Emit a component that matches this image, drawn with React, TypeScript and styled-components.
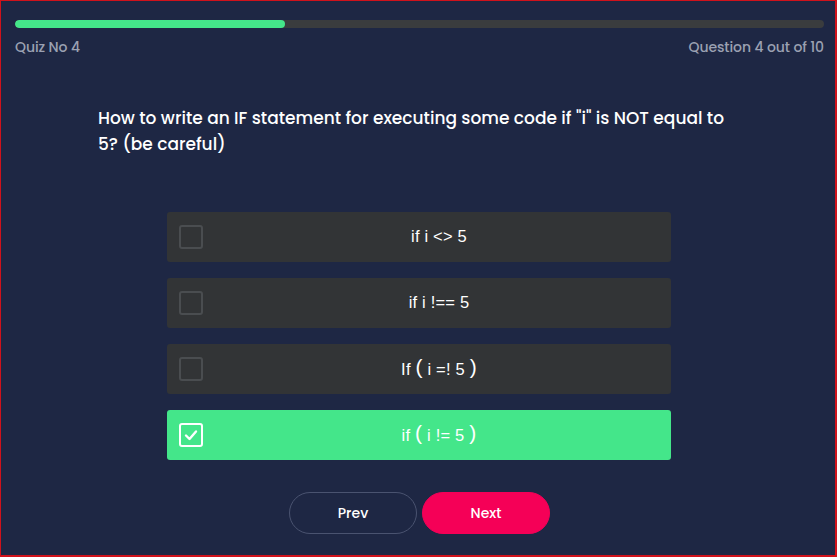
import React, { useState } from "react";
import styled, { createGlobalStyle } from "styled-components";

const Global = createGlobalStyle`
  html, body { margin: 0; padding: 0; background: #1e2744; }
  * { box-sizing: border-box; }
`;

const Frame = styled.div`
  width: 837px;
  height: 557px;
  background: #1e2744;
  border: 1px solid #d0121b;
  border-right-width: 2px;
  border-bottom-width: 2px;
  font-family: Poppins, "Open Sans", sans-serif;
  display: flex;
  flex-direction: column;
  padding: 19px 11px 0 14px;
`;

const Track = styled.div`
  height: 8px;
  border-radius: 4px;
  background: #3a3c3e;
  overflow: hidden;
`;

const Fill = styled.div`
  height: 100%;
  border-radius: 4px;
  background: #44e68a;
`;

const Meta = styled.div`
  display: flex;
  justify-content: space-between;
  margin-top: 9px;
  font-size: 14px;
  font-weight: 500;
  color: #9ba1b2;
  letter-spacing: -0.1px;
`;

const Question = styled.h2`
  margin: 47px 0 0 83px;
  width: 634px;
  font-size: 17px;
  font-weight: 500;
  line-height: 26px;
  color: #ffffff;
`;

const Options = styled.div`
  display: flex;
  flex-direction: column;
  gap: 16px;
  width: 504px;
  margin: 55px 0 0 152px;
`;

const Option = styled.button<{ $selected: boolean }>`
  height: 50px;
  border: none;
  border-radius: 3px;
  background: ${(p) => (p.$selected ? "#44e68a" : "#323436")};
  display: flex;
  align-items: center;
  padding: 0 0 0 12px;
  cursor: pointer;
  font-family: "Liberation Sans", Arial, sans-serif;
  font-size: 16.5px;
  color: #ffffff;
`;

const Box = styled.span<{ $selected: boolean }>`
  width: 24px;
  height: 24px;
  flex: 0 0 24px;
  border: 2.5px solid ${(p) => (p.$selected ? "#ffffff" : "#4a4d50")};
  border-radius: 3px;
  display: flex;
  align-items: center;
  justify-content: center;
`;

const Label = styled.span`
  flex: 1;
  text-align: center;
  padding-left: 4px;
  letter-spacing: 0.2px;
  position: relative;
  top: -1px;
`;

const Paren = styled.span`
  font-size: 21px;
  position: relative;
  top: -1px;
`;

const Buttons = styled.div`
  display: flex;
  gap: 5px;
  justify-content: center;
  margin-top: 32px;
`;

const Btn = styled.button<{ $primary?: boolean }>`
  width: 128px;
  height: 42px;
  border-radius: 21px;
  border: 1px solid ${(p) => (p.$primary ? "#f50057" : "#4a5370")};
  background: ${(p) => (p.$primary ? "#f50057" : "transparent")};
  color: #ffffff;
  font-family: Poppins, "Open Sans", sans-serif;
  font-size: 14px;
  font-weight: 500;
  cursor: pointer;
`;

const Check = () => (
  <svg width="16" height="16" viewBox="0 0 16 16">
    <path d="M3 8.5 L6.5 12 L13 4.5" fill="none" stroke="#ffffff" strokeWidth="2.4" strokeLinecap="round" strokeLinejoin="round" />
  </svg>
);

const renderLabel = (t: string) =>
  t.split(/([()])/).map((part, i) =>
    part === "(" || part === ")" ? <Paren key={i}>{part}</Paren> : <React.Fragment key={i}>{part}</React.Fragment>
  );

const options = ["if i <> 5", "if i !== 5", "If ( i =! 5 )", "if ( i != 5 )"];

export default function App() {
  const [sel, setSel] = useState(3);
  return (
    <>
      <Global />
      <Frame>
        <Track>
          <Fill style={{ width: `${(4 / 12) * 100}%` }} />
        </Track>
        <Meta>
          <span>Quiz No 4</span>
          <span>Question 4 out of 10</span>
        </Meta>
        <Question>
          How to write an IF statement for executing some code if "i" is NOT equal to 5? (be careful)
        </Question>
        <Options>
          {options.map((o, i) => (
            <Option key={o} $selected={sel === i} onClick={() => setSel(i)}>
              <Box $selected={sel === i}>{sel === i && <Check />}</Box>
              <Label>{renderLabel(o)}</Label>
            </Option>
          ))}
        </Options>
        <Buttons>
          <Btn>Prev</Btn>
          <Btn $primary>Next</Btn>
        </Buttons>
      </Frame>
    </>
  );
}
